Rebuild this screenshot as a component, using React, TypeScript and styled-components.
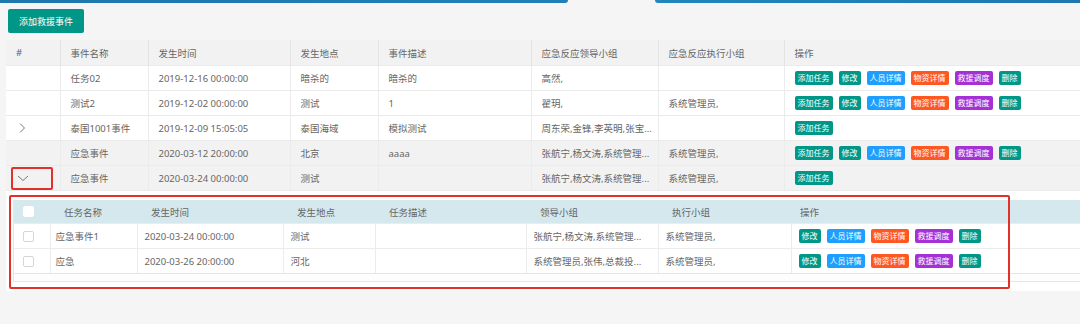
import styled, {createGlobalStyle} from 'styled-components';

const GlobalStyle = createGlobalStyle`
  html, body {
    margin: 0;
    padding: 0;
    background: #f5f5f6;
  }
  body {
    font-family: "Noto Sans", "Noto Sans CJK SC", sans-serif;
    color: #666;
  }
`;

type Act = 'add' | 'edit' | 'staff' | 'goods' | 'rescue' | 'del';

const ACT_LABEL: Record<Act, string> = {
  add: '添加任务',
  edit: '修改',
  staff: '人员详情',
  goods: '物资详情',
  rescue: '救援调度',
  del: '删除',
};

const ACT_COLOR: Record<Act, string> = {
  add: '#009688',
  edit: '#009688',
  staff: '#1e9fff',
  goods: '#ff5722',
  rescue: '#a531d6',
  del: '#009688',
};

const ALL: Act[] = ['add', 'edit', 'staff', 'goods', 'rescue', 'del'];
const SUB_ACTS: Act[] = ['edit', 'staff', 'goods', 'rescue', 'del'];

const events = [
  {arrow: '', name: '任务02', time: '2019-12-16 00:00:00', place: '暗杀的', desc: '暗杀的', lead: '高然,', exec: '', acts: ALL, gray: false},
  {arrow: '', name: '测试2', time: '2019-12-02 00:00:00', place: '测试', desc: '1', lead: '翟玥,', exec: '系统管理员,', acts: ALL, gray: false},
  {arrow: 'right', name: '泰国1001事件', time: '2019-12-09 15:05:05', place: '泰国海域', desc: '模拟测试', lead: '周东荣,金锋,李英明,张宝...', exec: '', acts: ['add'] as Act[], gray: false},
  {arrow: '', name: '应急事件', time: '2020-03-12 20:00:00', place: '北京', desc: 'aaaa', lead: '张航宁,杨文涛,系统管理...', exec: '系统管理员,', acts: ALL, gray: true},
];

const tasks = [
  {name: '应急事件1', time: '2020-03-24 00:00:00', place: '测试', desc: '', lead: '张航宁,杨文涛,系统管理...', exec: '系统管理员,'},
  {name: '应急', time: '2020-03-26 20:00:00', place: '河北', desc: '', lead: '系统管理员,张伟,总裁投...', exec: '系统管理员,'},
];

const Chevron = ({dir}: {dir: 'right' | 'down'}) => (
  <svg width="12" height="12" viewBox="0 0 12 12" fill="none" stroke="#777" strokeWidth="1">
    {dir === 'right' ? <path d="M4 1.5 L8.5 6 L4 10.5" /> : <path d="M1 4 L6 8.5 L11 4" />}
  </svg>
);

const Actions = ({acts}: {acts: Act[]}) => (
  <Tags>
    {acts.map((a) => (
      <Tag key={a} $color={ACT_COLOR[a]}>{ACT_LABEL[a]}</Tag>
    ))}
  </Tags>
);

const App = () => {
  return (
    <Page>
      <GlobalStyle />
      <TopStrip>
        <StripLeft />
        <StripRight />
      </TopStrip>
      <Toolbar>
        <MainButton>添加救援事件</MainButton>
      </Toolbar>
      <Table>
        <colgroup>
          <col style={{width: 54}} />
          <col style={{width: 88}} />
          <col style={{width: 142}} />
          <col style={{width: 88}} />
          <col style={{width: 153}} />
          <col style={{width: 127}} />
          <col style={{width: 126}} />
          <col />
        </colgroup>
        <thead>
          <tr>
            <Th>#</Th>
            <Th>事件名称</Th>
            <Th>发生时间</Th>
            <Th>发生地点</Th>
            <Th>事件描述</Th>
            <Th>应急反应领导小组</Th>
            <Th>应急反应执行小组</Th>
            <Th>操作</Th>
          </tr>
        </thead>
        <tbody>
          {events.map((e, i) => (
            <Tr key={i} $gray={e.gray}>
              <Td>{e.arrow === 'right' && <ArrowBox><Chevron dir="right" /></ArrowBox>}</Td>
              <Td>{e.name}</Td>
              <Td>{e.time}</Td>
              <Td>{e.place}</Td>
              <Td>{e.desc}</Td>
              <Td>{e.lead}</Td>
              <Td>{e.exec}</Td>
              <Td><Actions acts={e.acts} /></Td>
            </Tr>
          ))}
          <Tr $gray>
            <MarkCell>
              <ArrowBox $down><Chevron dir="down" /></ArrowBox>
              <Marker />
            </MarkCell>
            <Td>应急事件</Td>
            <Td>2020-03-24 00:00:00</Td>
            <Td>测试</Td>
            <Td></Td>
            <Td>张航宁,杨文涛,系统管理...</Td>
            <Td>系统管理员,</Td>
            <Td><Actions acts={['add']} /></Td>
          </Tr>
          <tr>
            <ExpandCell colSpan={8}>
              <SubWrap>
                <SubTable>
                  <colgroup>
                    <col style={{width: 36}} />
                    <col style={{width: 87}} />
                    <col style={{width: 146}} />
                    <col style={{width: 92}} />
                    <col style={{width: 151}} />
                    <col style={{width: 132}} />
                    <col style={{width: 133}} />
                    <col />
                  </colgroup>
                  <thead>
                    <tr>
                      <SubTh><Check $plain /></SubTh>
                      <SubTh>任务名称</SubTh>
                      <SubTh>发生时间</SubTh>
                      <SubTh>发生地点</SubTh>
                      <SubTh>任务描述</SubTh>
                      <SubTh>领导小组</SubTh>
                      <SubTh>执行小组</SubTh>
                      <SubTh $tight>操作</SubTh>
                    </tr>
                  </thead>
                  <tbody>
                    {tasks.map((t, i) => (
                      <tr key={i}>
                        <SubTd><Check /></SubTd>
                        <SubTd>{t.name}</SubTd>
                        <SubTd>{t.time}</SubTd>
                        <SubTd>{t.place}</SubTd>
                        <SubTd>{t.desc}</SubTd>
                        <SubTd>{t.lead}</SubTd>
                        <SubTd>{t.exec}</SubTd>
                        <SubTd><Actions acts={SUB_ACTS} /></SubTd>
                      </tr>
                    ))}
                  </tbody>
                </SubTable>
                <SubFooter />
              </SubWrap>
              <Frame />
            </ExpandCell>
          </tr>
        </tbody>
      </Table>
    </Page>
  );
};

export default App;

const Page = styled.div`
  width: 1080px;
  height: 324px;
  overflow: hidden;
  background: #f5f5f6;
`;

const TopStrip = styled.div`
  display: flex;
  height: 3px;
  gap: 87px;
`;

const StripLeft = styled.div`
  width: 568px;
  background: linear-gradient(90deg, #1d77ad, #1f80b8);
  border-bottom-right-radius: 3px;
`;

const StripRight = styled.div`
  flex: 1;
  background: linear-gradient(90deg, #2286bd, #1d78b0);
  border-bottom-left-radius: 3px;
`;

const Toolbar = styled.div`
  display: flex;
  padding: 6px 0 7px 8px;
`;

const MainButton = styled.button`
  display: block;
  height: 24px;
  padding: 0 11px;
  border: none;
  border-radius: 2px;
  background: #009688;
  color: #fff;
  font-family: inherit;
  font-size: 9px;
  cursor: pointer;
`;

const Table = styled.table`
  margin-left: 6px;
  width: 1074px;
  table-layout: fixed;
  border-collapse: collapse;
  background: #fff;
  font-size: 9.5px;
`;

const Th = styled.th`
  height: 25px;
  padding: 0 10px;
  text-align: left;
  font-weight: 400;
  color: #666;
  background: #f2f2f2;
  border-left: 1px solid #e4e4e4;
  white-space: nowrap;
  &:first-child {
    border-left: none;
  }
`;

const Tr = styled.tr<{$gray?: boolean}>`
  background: ${(p) => (p.$gray ? '#f2f2f2' : '#fff')};
`;

const Td = styled.td`
  height: 24px;
  padding: 0 10px;
  border-top: 1px solid #ebebeb;
  border-left: 1px solid #ebebeb;
  white-space: nowrap;
  overflow: hidden;
  &:first-child {
    border-left: none;
  }
`;

const MarkCell = styled(Td)`
  position: relative;
`;

const ArrowBox = styled.span<{$down?: boolean}>`
  display: flex;
  align-items: center;
  padding-left: ${(p) => (p.$down ? '1px' : '0')};
`;

const Marker = styled.div`
  position: absolute;
  left: 5px;
  top: 1px;
  width: 42px;
  height: 23px;
  box-sizing: border-box;
  border: 2px solid #e2302a;
  border-radius: 2px;
`;

const Tags = styled.div`
  display: flex;
  gap: 6px;
`;

const Tag = styled.span<{$color: string}>`
  height: 14px;
  line-height: 14px;
  padding: 0 3px;
  border-radius: 2px;
  background: ${(p) => p.$color};
  color: #fff;
  font-size: 8px;
`;

const ExpandCell = styled.td`
  position: relative;
  padding: 9px 0 9px 7px;
  border-top: 1px solid #ebebeb;
  background: #fff;
`;

const SubWrap = styled.div`
  border-left: 1px solid #e6e6e6;
`;

const SubTable = styled.table`
  width: 100%;
  table-layout: fixed;
  border-collapse: collapse;
  font-size: 9.5px;
`;

const SubTh = styled.th<{$tight?: boolean}>`
  height: 23px;
  padding: 0 ${(p) => (p.$tight ? '9px' : '14px')};
  text-align: left;
  font-weight: 400;
  color: #666;
  background: #d4e8ee;
  white-space: nowrap;
  &:first-child {
    padding: 0 0 0 9px;
  }
`;

const SubTd = styled.td`
  height: 24px;
  padding: 0 7px;
  border-top: 1px solid #ececec;
  border-left: 1px solid #ececec;
  white-space: nowrap;
  overflow: hidden;
  &:first-child {
    border-left: none;
    padding-left: 9px;
  }
  &:nth-child(2) {
    padding-left: 5px;
  }
`;

const Check = styled.span<{$plain?: boolean}>`
  display: block;
  width: 11px;
  height: 11px;
  box-sizing: border-box;
  background: #fff;
  border: 1px solid ${(p) => (p.$plain ? '#fff' : '#d6d6d6')};
  border-radius: 2px;
`;

const SubFooter = styled.div`
  height: 7px;
  border-top: 1px solid #e6e6e6;
  border-bottom: 1px solid #e6e6e6;
  background: #fdfdfd;
`;

const Frame = styled.div`
  position: absolute;
  left: 3px;
  top: 4px;
  width: 1001px;
  height: 94px;
  box-sizing: border-box;
  border: 2px solid #e2302a;
  border-radius: 2px;
  pointer-events: none;
`;
